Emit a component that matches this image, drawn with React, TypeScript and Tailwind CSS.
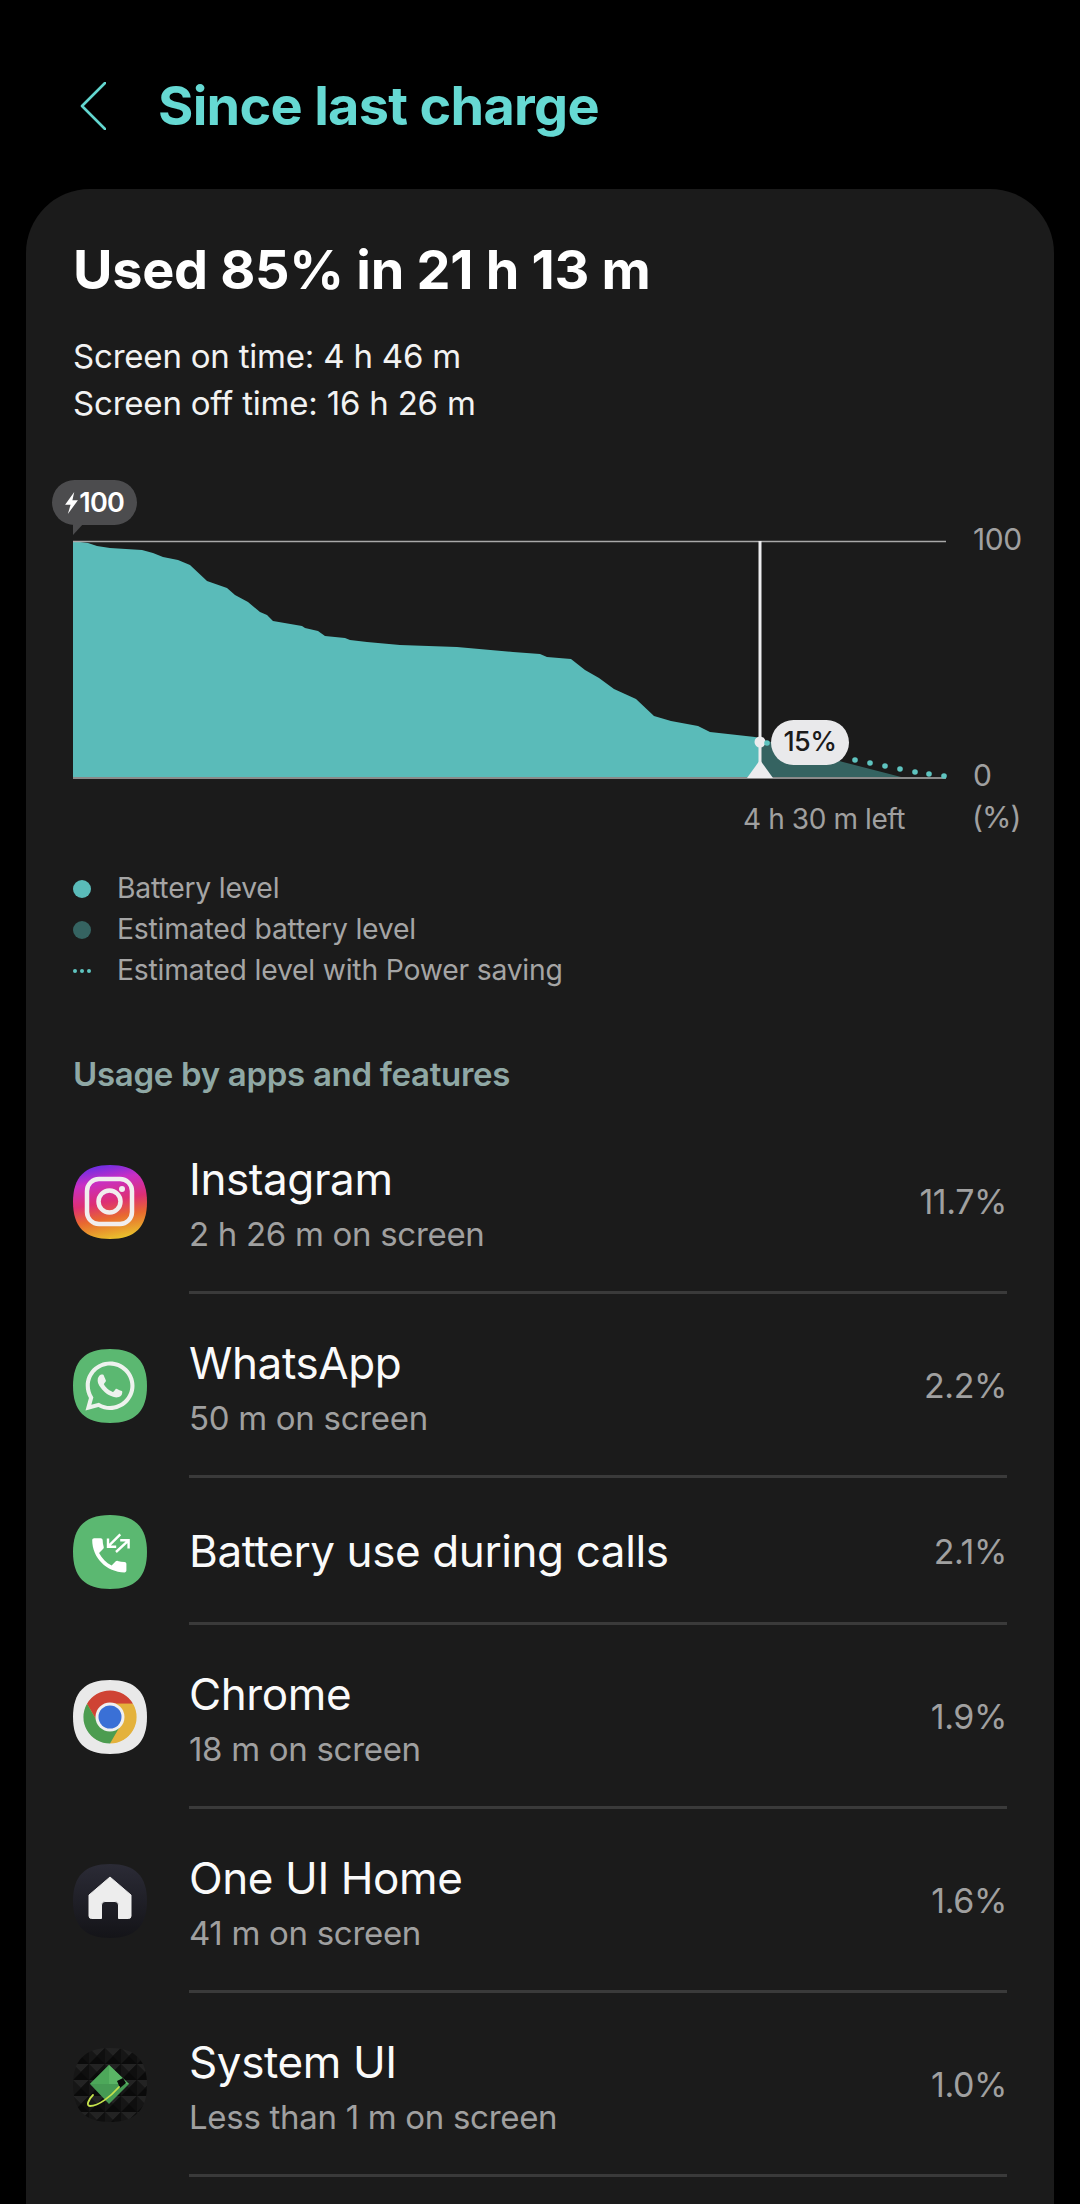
import { FaWhatsapp } from 'react-icons/fa';
import type { ReactNode } from 'react';

const SQUIRCLE = 'M37 0C62 0 74 12 74 37C74 62 62 74 37 74C12 74 0 62 0 37C0 12 12 0 37 0Z';

const CURVE =
  '73,541 88,543 97,546 110,548 142,550 153,553 163,557 178,560 190,565 207,581 227,588 235,595 248,602 260,612 267,615 273,621 302,626 305,628 318,631 325,636 345,638 350,640 367,642 400,645 457,647 513,652 540,654 547,657 571,659 585,670 599,678 614,689 636,699 654,716 671,721 698,726 710,732 755,737 760,738';

const DOTS = [
  [767, 743],
  [855, 760],
  [870, 763],
  [885, 766],
  [900, 769],
  [915, 772],
  [929, 774],
  [944, 776],
];

function InstagramIcon() {
  return (
    <svg viewBox="0 0 74 74" className="w-[74px] h-[74px]">
      <defs>
        <linearGradient id="ig" x1="0.35" y1="0" x2="0.55" y2="1">
          <stop offset="0" stopColor="#6a2ee6" />
          <stop offset="0.22" stopColor="#c92fc4" />
          <stop offset="0.5" stopColor="#dd2f74" />
          <stop offset="0.72" stopColor="#e8692f" />
          <stop offset="1" stopColor="#e9c02c" />
        </linearGradient>
      </defs>
      <path d={SQUIRCLE} fill="url(#ig)" />
      <rect x="14" y="14" width="45" height="45" rx="12" fill="none" stroke="#f1eeee" strokeWidth="4.5" />
      <circle cx="36.5" cy="36.5" r="11" fill="none" stroke="#f1eeee" strokeWidth="4.5" />
      <circle cx="49" cy="24" r="3" fill="#f1eeee" />
    </svg>
  );
}

function WhatsAppIcon() {
  return (
    <div className="relative w-[74px] h-[74px] flex items-center justify-center">
      <svg viewBox="0 0 74 74" className="absolute inset-0 w-[74px] h-[74px]">
        <path d={SQUIRCLE} fill="#5bb871" />
      </svg>
      <FaWhatsapp className="relative text-[#eef2ee]" size={56} />
    </div>
  );
}

function CallsIcon() {
  return (
    <svg viewBox="0 0 74 74" className="w-[74px] h-[74px]">
      <path d={SQUIRCLE} fill="#5bb871" />
      <g transform="translate(13.5 17.5) scale(1.9)" fill="#fff">
        <path d="M6.62 10.79c1.44 2.83 3.76 5.14 6.59 6.59l2.2-2.2c.27-.27.67-.36 1.02-.24 1.12.37 2.33.57 3.57.57.55 0 1 .45 1 1V20c0 .55-.45 1-1 1-9.39 0-17-7.61-17-17 0-.55.45-1 1-1h3.5c.55 0 1 .45 1 1 0 1.25.2 2.45.57 3.57.11.35.03.74-.25 1.02l-2.2 2.2z" />
      </g>
      <g fill="none" stroke="#fff" strokeWidth="2.4">
        <path d="M47.3 19.3L35 31.7M35 23.5V31.7H43.2" />
        <path d="M43 37L55.6 25.3M47.2 25.3H55.6V33.5" />
      </g>
    </svg>
  );
}

function ChromeIcon() {
  const red = 'M-23 -13.25A26.5 26.5 0 0 1 23 -13.25L0 -13.25L-11.5 6.6Z';
  return (
    <svg viewBox="0 0 74 74" className="w-[74px] h-[74px]">
      <path d={SQUIRCLE} fill="#e9e9e9" />
      <g transform="translate(37 37)">
        <circle r="26" fill="#e4b23c" />
        <path d={red} fill="#cf4334" />
        <path d={red} fill="#e4b23c" transform="rotate(120)" />
        <path d={red} fill="#4c9c50" transform="rotate(240)" />
        <circle r="14.5" fill="#f0f0f0" />
        <circle r="11.5" fill="#3a70d6" />
      </g>
    </svg>
  );
}

function HomeIcon() {
  return (
    <svg viewBox="0 0 74 74" className="w-[74px] h-[74px]">
      <defs>
        <linearGradient id="home" x1="0" y1="0" x2="0" y2="1">
          <stop offset="0" stopColor="#2b2b36" />
          <stop offset="1" stopColor="#141418" />
        </linearGradient>
      </defs>
      <path d={SQUIRCLE} fill="url(#home)" />
      <path
        d="M37 13L58 31V52Q58 54.500 55.500 54.500H45.500V41Q45.500 37.500 42 37.500H32Q28.500 37.500 28.500 41V54.500H18.500Q16 54.500 16 52V31Z"
        fill="#ededed"
        stroke="#ededed"
        strokeLinejoin="round"
        strokeWidth="1"
      />
    </svg>
  );
}

function SystemIcon() {
  return (
    <svg viewBox="0 0 74 74" className="w-[74px] h-[74px]">
      <defs>
        <pattern id="tri" width="16" height="16" patternUnits="userSpaceOnUse">
          <rect width="16" height="16" fill="#0a0a0a" />
          <path d="M0 0L8 8L0 16Z" fill="#161616" />
          <path d="M0 0L16 0L8 8Z" fill="#232323" />
          <path d="M16 0L16 16L8 8Z" fill="#0f0f0f" />
        </pattern>
      </defs>
      <path d={SQUIRCLE} fill="url(#tri)" />
      <path d="M36 17L56 36L36 56L17 36Z" fill="#469a54" />
      <path d="M36 17L56 36L36 36Z" fill="#5ab565" />
      <path d="M17 36L36 17V36Z" fill="#4da85a" />
      <path d="M44 33L50 30L53 35L47 40Z" fill="#0a0a0a" />
      <path d="M46 39C38 48 26 58 17 58C13 58 15 52 20 47" fill="none" stroke="#c6e24c" strokeWidth="1.800" strokeLinecap="round" />
    </svg>
  );
}

function Row({
  icon,
  title,
  sub,
  pct,
  tall = true,
}: {
  icon: ReactNode;
  title: string;
  sub?: string;
  pct: string;
  tall?: boolean;
}) {
  return (
    <div className={`flex gap-[42px] ${tall ? 'h-[184px]' : 'h-[147px]'}`}>
      <div className="flex items-center shrink-0">{icon}</div>
      <div className="flex-1 flex items-center justify-between border-b-[3px] border-[#3a3a3a]">
        <div className={tall ? 'mt-[6px]' : 'mt-[2px]'}>
          <p className="text-[44px] leading-[54px] tracking-[-0.4px] text-[#fafafa]">{title}</p>
          <p className={`text-[33px] leading-[44px] mt-[6px] tracking-[-0.3px] text-[#a0a0a0] ${sub ? '' : 'hidden'}`}>{sub}</p>
        </div>
        <span className="text-[34px] mt-[2px] tracking-[-0.4px] text-[#a0a0a0]">{pct}</span>
      </div>
    </div>
  );
}

export default function App() {
  return (
    <div className="w-[1080px] h-[2204px] overflow-hidden bg-black font-['Inter',sans-serif]">
      <header className="h-[189px] flex items-center pl-[80px] pt-[22px] gap-[52px]">
        <svg viewBox="0 0 26 48" className="w-[26px] h-[48px]">
          <path d="M25 1L2 24L25 47" fill="none" stroke="#62d6cf" strokeWidth="2.600" strokeLinecap="round" strokeLinejoin="round" />
        </svg>
        <h1 className="text-[54px] font-bold tracking-[-0.7px] text-[#66d9d3]">Since last charge</h1>
      </header>

      <main className="mx-[26px] h-[2015px] rounded-t-[64px] bg-[#1b1b1b] pl-[47px] pr-[47px] pt-[50px]">
        <h2 className="text-[54px] leading-[62px] font-bold tracking-[-0.3px] text-white">Used 85% in 21 h 13 m</h2>
        <div className="mt-[32px] text-[33px] leading-[47px] tracking-[-0.2px] text-[#f2f2f2]">
          <p>Screen on time: 4 h 46 m</p>
          <p>Screen off time: 16 h 26 m</p>
        </div>

        <div className="relative -mx-[47px] mt-[53px] h-[360px]">
          <svg viewBox="26 480 1028 360" className="w-[1028px] h-[360px]">
            <polygon points={`${CURVE} 760,778 73,778`} fill="#5abbb9" />
            <polygon points="760,739 843,762 905,778 760,778" fill="#356361" />
            <line x1="73" y1="541.500" x2="946" y2="541.500" stroke="#a9a9a9" strokeWidth="1.500" />
            <line x1="73" y1="778" x2="946" y2="778" stroke="#8a8a8a" strokeWidth="2" />
            <line x1="760" y1="541" x2="760" y2="770" stroke="#ececee" strokeWidth="3" />
            <circle cx="760" cy="742" r="5.500" fill="#ececee" />
            <path d="M760 760L773 778H747Z" fill="#ececee" />
            {DOTS.map(([x, y]) => (
              <circle key={x} cx={x} cy={y} r="2.800" fill="#5fc4c0" />
            ))}
            <path d="M73 523H84L73 535Z" fill="#4c4c4e" />
          </svg>

          <div className="absolute left-[26px] top-0 w-[85px] h-[45px] rounded-full bg-[#4c4c4e] flex items-center justify-end pr-[13px] pt-[2px] text-[27px] font-semibold tracking-[-0.8px] text-white">
            100
          </div>
          <svg viewBox="0 0 14 24" className="absolute left-[39px] top-[12px] w-[13px] h-[22px]">
            <path d="M10 0L0 14H6L3 24L14 9H8Z" fill="#fff" />
          </svg>
          <div className="absolute left-[745px] top-[240px] w-[78px] h-[45px] rounded-full bg-[#e9e9eb] flex items-center justify-center text-[27px] font-medium tracking-[-0.5px] text-[#1b1b1b]">
            15%
          </div>
          <span className="absolute left-[947px] top-[37px] text-[30px] tracking-[-0.5px] text-[#a0a0a0]">100</span>
          <span className="absolute left-[947px] top-[273px] text-[30px] text-[#a0a0a0]">0</span>
          <span className="absolute left-[946px] top-[315px] text-[30px] tracking-[-1px] text-[#a0a0a0]">(%)</span>
          <span className="absolute left-[717px] top-[318px] text-[28px] tracking-[-0.4px] text-[#a0a0a0]">4 h 30 m left</span>
        </div>

        <ul className="mt-[28px] flex flex-col text-[28.300px] tracking-[-0.2px] text-[#a5a5a5]">
          <li className="flex items-center h-[41px] gap-[26px]">
            <span className="w-[18px] h-[18px] rounded-full bg-[#5abbb9]" />
            Battery level
          </li>
          <li className="flex items-center h-[41px] gap-[26px]">
            <span className="w-[18px] h-[18px] rounded-full bg-[#356361]" />
            Estimated battery level
          </li>
          <li className="flex items-center h-[41px] gap-[26px]">
            <span className="w-[18px] flex justify-between">
              <i className="w-[4px] h-[4px] rounded-full bg-[#5fc4c0]" />
              <i className="w-[4px] h-[4px] rounded-full bg-[#5fc4c0]" />
              <i className="w-[4px] h-[4px] rounded-full bg-[#5fc4c0]" />
            </span>
            Estimated level with Power saving
          </li>
        </ul>

        <h3 className="mt-[63px] text-[33px] leading-[40px] font-semibold tracking-[-0.3px] text-[#8fa8a5]">Usage by apps and features</h3>

        <div className="mt-[16px]">
          <Row icon={<InstagramIcon />} title="Instagram" sub="2 h 26 m on screen" pct="11.7%" />
          <Row icon={<WhatsAppIcon />} title="WhatsApp" sub="50 m on screen" pct="2.2%" />
          <Row icon={<CallsIcon />} title="Battery use during calls" pct="2.1%" tall={false} />
          <Row icon={<ChromeIcon />} title="Chrome" sub="18 m on screen" pct="1.9%" />
          <Row icon={<HomeIcon />} title="One UI Home" sub="41 m on screen" pct="1.6%" />
          <Row icon={<SystemIcon />} title="System UI" sub="Less than 1 m on screen" pct="1.0%" />
        </div>
      </main>
    </div>
  );
}
